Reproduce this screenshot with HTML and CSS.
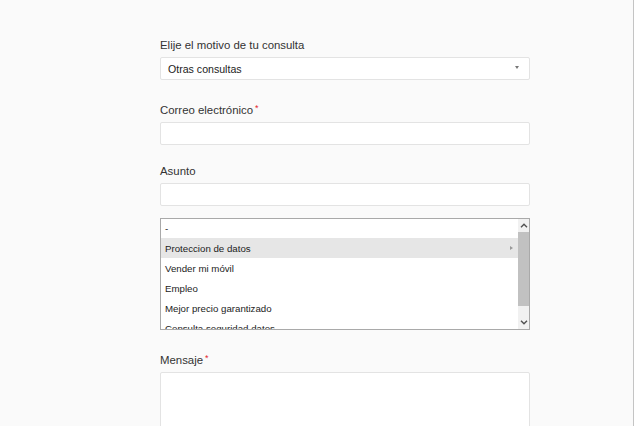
FILE: index.html
```html
<!DOCTYPE html>
<html lang="es">
<head>
  <meta charset="UTF-8">
  <title>Contacto</title>
  <link rel="stylesheet" href="styles.css">
</head>
<body>
  <div class="page">
    <form class="contact">
      <div class="field field-first">
        <label class="label">Elije el motivo de tu consulta</label>
        <div class="select">
          <span>Otras consultas</span>
          <span class="select-arrow"></span>
        </div>
      </div>

      <div class="field field-email">
        <label class="label">Correo electrónico<span class="req">*</span></label>
        <input class="input" type="text">
      </div>

      <div class="field field-subject">
        <label class="label">Asunto</label>
        <input class="input" type="text">
      </div>

      <div class="options">
        <ul class="options-list">
          <li>-</li>
          <li class="active">Proteccion de datos<span class="submenu"></span></li>
          <li>Vender mi móvil</li>
          <li>Empleo</li>
          <li>Mejor precio garantizado</li>
          <li>Consulta seguridad datos</li>
        </ul>
        <div class="scrollbar">
          <div class="scroll-btn">
            <svg width="8" height="5" viewBox="0 0 8 5"><path d="M1 4.2 L4 1.2 L7 4.2" fill="none" stroke="#505050" stroke-width="1.4"/></svg>
          </div>
          <div class="scroll-track"><div class="scroll-thumb"></div></div>
          <div class="scroll-btn">
            <svg width="8" height="5" viewBox="0 0 8 5"><path d="M1 0.8 L4 3.8 L7 0.8" fill="none" stroke="#505050" stroke-width="1.4"/></svg>
          </div>
        </div>
      </div>

      <div class="field field-message">
        <label class="label">Mensaje<span class="req">*</span></label>
        <textarea class="textarea"></textarea>
      </div>
    </form>
  </div>
</body>
</html>
```

FILE: styles.css
```css
html, body {
  margin: 0;
  padding: 0;
}

body {
  font-family: "Liberation Sans", Arial, sans-serif;
  background-color: #fafafa;
  color: #333;
}

.page {
  min-height: 426px;
  border-right: 1px solid #c4c4c4;
  box-sizing: border-box;
}

.contact {
  width: 370px;
  margin-left: 160px;
  padding-top: 38px;
}

.label {
  display: block;
  font-size: 11.4px;
  line-height: 14px;
  margin-bottom: 5px;
  color: #333;
}

.req {
  color: #e3262f;
  font-size: 9px;
  line-height: 0;
  vertical-align: 3px;
  margin-left: 2px;
}

.field-email {
  margin-top: 23px;
}

.field-subject {
  margin-top: 19px;
}

.field-message {
  margin-top: 23px;
}

.select, .input, .textarea {
  display: block;
  width: 100%;
  box-sizing: border-box;
  background-color: #fff;
  border: 1px solid #e3e3e3;
  border-radius: 2px;
  margin: 0;
  font-family: inherit;
}

.select, .input {
  height: 23px;
}

.select {
  display: flex;
  align-items: center;
  justify-content: space-between;
  padding: 0 10px 0 7px;
  font-size: 10.6px;
  color: #222;
}

.select-arrow {
  width: 0;
  height: 0;
  border-left: 2px solid transparent;
  border-right: 2px solid transparent;
  border-top: 3px solid #777;
  margin-top: -2px;
}

.textarea {
  height: 110px;
  resize: none;
}

.options {
  display: flex;
  margin-top: 12px;
  height: 112px;
  box-sizing: border-box;
  border: 1px solid #a9a9a9;
  background-color: #fff;
  overflow: hidden;
}

.options-list {
  flex: 1;
  list-style: none;
  margin: -1px 0 0 0;
  padding: 0;
  font-size: 9.7px;
  color: #222;
}

.options-list li {
  display: flex;
  align-items: center;
  justify-content: space-between;
  height: 20px;
  padding: 0 5px 0 4px;
}

.options-list li.active {
  background-color: #e6e6e6;
}

.submenu {
  width: 0;
  height: 0;
  border-top: 2.5px solid transparent;
  border-bottom: 2.5px solid transparent;
  border-left: 3px solid #999;
}

.scrollbar {
  width: 11px;
  display: flex;
  flex-direction: column;
  background-color: #f1f1f1;
}

.scroll-btn {
  height: 13px;
  display: flex;
  align-items: center;
  justify-content: center;
}

.scroll-track {
  flex: 1;
  padding-bottom: 10px;
  display: flex;
}

.scroll-thumb {
  flex: 1;
  background-color: #c1c1c1;
}
```
